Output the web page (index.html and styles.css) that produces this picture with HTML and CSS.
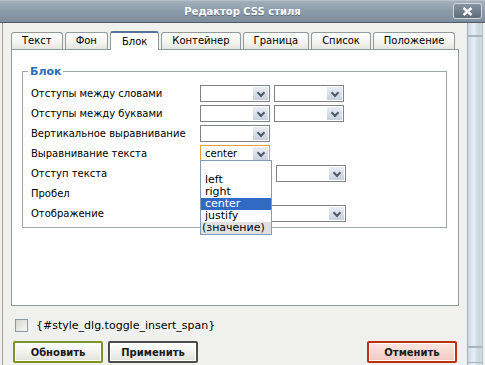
FILE: index.html
```html
<!DOCTYPE html>
<html lang="ru">
<head>
    <meta charset="UTF-8">
    <title>Редактор CSS стиля</title>
    <link rel="stylesheet" href="styles.css">
</head>
<body>
    <div class="titlebar">
        <span class="title">Редактор CSS стиля</span>
        <span class="close">
            <svg width="11" height="9" viewBox="0 0 11 9"><path d="M1.5 1 L9.5 8 M9.5 1 L1.5 8" stroke="#fff" stroke-width="2.4" fill="none"/></svg>
        </span>
    </div>

    <div class="frame">
        <div class="edge"></div>

        <div class="dialog">
            <ul class="tabs">
                <li class="tab">Текст</li>
                <li class="tab">Фон</li>
                <li class="tab active">Блок</li>
                <li class="tab">Контейнер</li>
                <li class="tab">Граница</li>
                <li class="tab">Список</li>
                <li class="tab">Положение</li>
            </ul>

            <div class="panel">
                <fieldset class="group">
                    <legend>Блок</legend>
                    <div class="rows">
                        <span class="label">Отступы между словами</span>
                        <div class="controls">
                            <div class="select"><span class="value"></span><span class="arrow"></span></div>
                            <div class="select"><span class="value"></span><span class="arrow"></span></div>
                        </div>

                        <span class="label">Отступы между буквами</span>
                        <div class="controls">
                            <div class="select"><span class="value"></span><span class="arrow"></span></div>
                            <div class="select"><span class="value"></span><span class="arrow"></span></div>
                        </div>

                        <span class="label">Вертикальное выравнивание</span>
                        <div class="controls">
                            <div class="select"><span class="value"></span><span class="arrow"></span></div>
                        </div>

                        <span class="label">Выравнивание текста</span>
                        <div class="controls open">
                            <div class="select focused"><span class="value">center</span><span class="arrow"></span></div>
                            <ul class="dropdown">
                                <li class="option blank"></li>
                                <li class="option">left</li>
                                <li class="option">right</li>
                                <li class="option selected">center</li>
                                <li class="option">justify</li>
                                <li class="option muted">(значение)</li>
                            </ul>
                        </div>

                        <span class="label">Отступ текста</span>
                        <div class="controls">
                            <div class="textbox"></div>
                            <div class="select"><span class="value"></span><span class="arrow"></span></div>
                        </div>

                        <span class="label">Пробел</span>
                        <div class="controls">
                            <div class="select"><span class="value"></span><span class="arrow"></span></div>
                        </div>

                        <span class="label">Отображение</span>
                        <div class="controls">
                            <div class="select wide"><span class="value"></span><span class="arrow"></span></div>
                        </div>
                    </div>
                </fieldset>
            </div>

            <label class="toggle">
                <span class="checkbox"></span>
                <span>{#style_dlg.toggle_insert_span}</span>
            </label>

            <div class="actions">
                <button class="btn update">Обновить</button>
                <button class="btn apply">Применить</button>
                <span class="spacer"></span>
                <button class="btn cancel">Отменить</button>
            </div>
        </div>

        <div class="scroll">
            <div class="scroll-top"></div>
            <div class="scroll-track"></div>
            <div class="scroll-bottom"></div>
        </div>
    </div>
</body>
</html>
```

FILE: styles.css
```css
* {
    box-sizing: border-box;
}

body {
    margin: 0;
    width: 485px;
    height: 365px;
    overflow: hidden;
    background: #f0f0ee;
    font-family: "DejaVu Sans", Verdana, sans-serif;
    font-size: 10px;
    color: #000;
}

/* title bar */
.titlebar {
    height: 23px;
    display: flex;
    align-items: center;
    justify-content: center;
    position: relative;
    background: linear-gradient(#c9d1d9 0, #a3afbb 1px, #8a99a7 55%, #7d8d9c 100%);
    border-bottom: 1px solid #4f5b67;
}

.title {
    color: #fff;
    font-weight: bold;
    font-size: 10px;
    text-shadow: 0 1px 0 #5f6d7a;
}

.close {
    position: absolute;
    right: 3px;
    top: 3px;
    width: 29px;
    height: 16px;
    display: flex;
    align-items: center;
    justify-content: center;
    border: 1px solid #d2d8de;
    border-radius: 3px;
    background: linear-gradient(#8593a1, #5f6c7a);
}

/* window body */
.frame {
    display: flex;
    height: 342px;
}

.edge {
    width: 3px;
    flex: none;
    border-left: 2px solid #f0f0ee;
    background: #a89a8c;
}

.dialog {
    width: 464px;
    flex: none;
    display: flex;
    flex-direction: column;
    padding: 8px 8px 0 8px;
}

/* tabs */
.tabs {
    list-style: none;
    margin: 0;
    padding: 0;
    display: flex;
    align-items: flex-end;
    gap: 2px;
    height: 18px;
    position: relative;
    z-index: 1;
}

.tab {
    height: 17px;
    padding: 0 10px;
    line-height: 15px;
    border: 1px solid #919b9c;
    border-bottom: none;
    border-radius: 3px 3px 0 0;
    background: linear-gradient(#ffffff, #f3f3ef 60%, #e6e6e0);
    white-space: nowrap;
}

.tab.active {
    height: 19px;
    margin-bottom: -1px;
    padding: 0 11px;
    line-height: 17px;
    background: #fff;
    border-top: 2px solid #56739a;
}

.panel {
    height: 257px;
    border: 1px solid #919b9c;
    background: #fff;
    padding: 15px 11px 0 10px;
}

/* fieldset */
.group {
    margin: 0;
    padding: 0 0 4px 0;
    border: 1px solid #9ea6a8;
}

.group legend {
    margin-left: 5px;
    padding: 0 2px;
    font-weight: bold;
    font-size: 11px;
    color: #2a6bb5;
    line-height: 13px;
}

.rows {
    display: grid;
    grid-template-columns: 169px 1fr;
    grid-auto-rows: 20px;
    align-items: center;
    padding: 5px 0 0 8px;
}

.label {
    white-space: nowrap;
}

.controls {
    display: flex;
    gap: 4px;
    position: relative;
}

.select {
    width: 70px;
    height: 17px;
    display: flex;
    border: 1px solid #7f8287;
    background: #fff;
    padding: 1px;
}

.select.wide {
    width: 146px;
}

.select.focused {
    border-color: #e2a23a;
}

.value {
    flex: 1;
    padding-left: 3px;
    line-height: 13px;
}

.arrow {
    width: 15px;
    height: 13px;
    background: linear-gradient(#e9eef5, #c7d1dd);
    position: relative;
}

.arrow::after {
    content: "";
    position: absolute;
    left: 5px;
    top: 3px;
    width: 4px;
    height: 4px;
    border-right: 2px solid #4e5b6b;
    border-bottom: 2px solid #4e5b6b;
    transform: rotate(45deg);
}

.textbox {
    width: 72px;
    height: 17px;
    border: 1px solid #7f8287;
    background: #fff;
}

/* open list over the rows below */
.dropdown {
    position: absolute;
    left: 0;
    top: 15px;
    width: 72px;
    margin: 0;
    padding: 0;
    list-style: none;
    background: #fff;
    border: 1px solid #7f9db9;
    z-index: 2;
}

.option {
    height: 12px;
    line-height: 12px;
    padding-left: 4px;
    font-size: 11px;
}

.option.blank {
    height: 13px;
}

.option.selected {
    background: #316ac5;
    color: #fff;
}

.option.muted {
    background: #e0e0e0;
    padding-left: 1px;
}

/* checkbox row */
.toggle {
    display: flex;
    align-items: center;
    gap: 8px;
    height: 13px;
    margin: 13px 0 0 4px;
    font-size: 11px;
}

.checkbox {
    width: 13px;
    height: 13px;
    border: 1px solid #8e9aa6;
    background: linear-gradient(135deg, #d6d6d0, #f8f8f6);
}

/* buttons */
.actions {
    display: flex;
    gap: 5px;
    margin-top: 9px;
    padding-left: 2px;
    padding-right: 2px;
}

.spacer {
    flex: 1;
}

.btn {
    width: 90px;
    height: 22px;
    padding: 0;
    font-family: "DejaVu Sans", Verdana, sans-serif;
    font-size: 10px;
    font-weight: bold;
    color: #1a1a1a;
    border: 2px solid #5a5a5a;
    border-radius: 2px;
    background: linear-gradient(#ffffff, #f1f1ee 50%, #e2e2dc);
    box-shadow: inset 0 0 0 1px #fff;
}

.btn.update {
    border-color: #7d9427;
}

.btn.apply {
    border-color: #4c4c4c;
}

.btn.cancel {
    border-color: #bd2f0d;
    background: linear-gradient(#fbe6e2, #f1c9c1);
}

/* fake scroll strip on the right */
.scroll {
    width: 16px;
    flex: none;
    display: flex;
    flex-direction: column;
    border-left: 1px solid #a7b0b9;
    border-right: 1px solid #b9c0c7;
    background: linear-gradient(90deg, #cfd9e4, #e6edf4 40%, #c9d3de 80%, #d7dde4);
}

.scroll-top {
    height: 14px;
    border-bottom: 2px solid #a9b4bf;
}

.scroll-track {
    flex: 1;
}

.scroll-bottom {
    height: 17px;
    border-top: 2px solid #a9b4bf;
    border-bottom: 1px solid #a9b4bf;
    margin-bottom: 2px;
}
```
